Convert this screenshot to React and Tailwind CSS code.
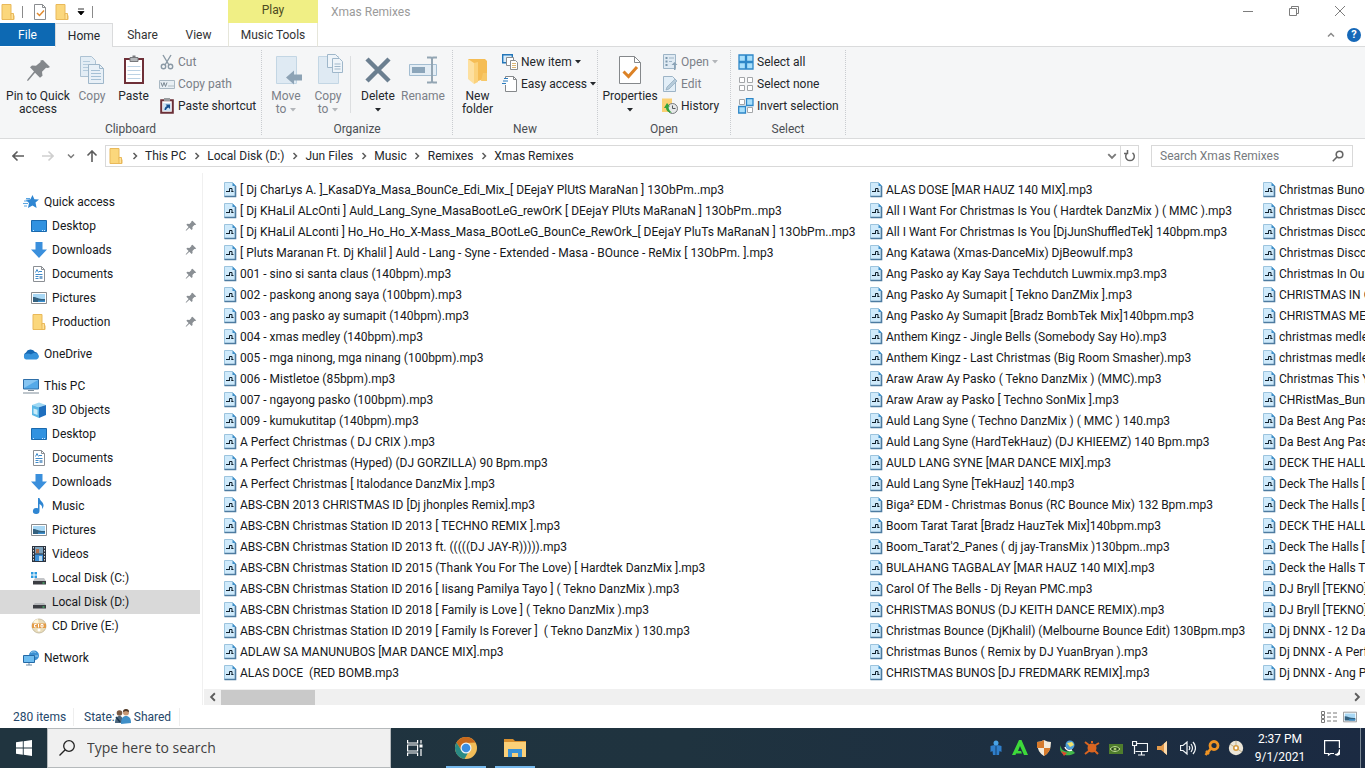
import React from 'react';

const quickAccess = [
  { name: 'Desktop', icon: 'desktop' },
  { name: 'Downloads', icon: 'download' },
  { name: 'Documents', icon: 'document' },
  { name: 'Pictures', icon: 'picture' },
  { name: 'Production', icon: 'folder' },
];

const thisPc = [
  { name: '3D Objects', icon: 'cube' },
  { name: 'Desktop', icon: 'desktop' },
  { name: 'Documents', icon: 'document' },
  { name: 'Downloads', icon: 'download' },
  { name: 'Music', icon: 'music' },
  { name: 'Pictures', icon: 'picture' },
  { name: 'Videos', icon: 'video' },
  { name: 'Local Disk (C:)', icon: 'systemDisk' },
  { name: 'Local Disk (D:)', icon: 'disk', selected: true },
  { name: 'CD Drive (E:)', icon: 'cd' },
];

const path = ['This PC', 'Local Disk (D:)', 'Jun Files', 'Music', 'Remixes', 'Xmas Remixes'];

const fileColumns = [
  {
    width: 'w-[646px]',
    files: [
      '[ Dj CharLys A. ]_KasaDYa_Masa_BounCe_Edi_Mix_[ DEejaY PlUtS MaraNan ] 13ObPm..mp3',
      '[ Dj KHaLil ALcOnti ] Auld_Lang_Syne_MasaBootLeG_rewOrK [ DEejaY PlUts MaRanaN ] 13ObPm..mp3',
      '[ Dj KHaLil ALconti ] Ho_Ho_Ho_X-Mass_Masa_BOotLeG_BounCe_RewOrk_[ DEejaY PluTs MaRanaN ] 13ObPm..mp3',
      '[ Pluts Maranan Ft. Dj Khalil ] Auld - Lang - Syne - Extended - Masa - BOunce - ReMix [ 13ObPm. ].mp3',
      '001 - sino si santa claus (140bpm).mp3',
      '002 - paskong anong saya (100bpm).mp3',
      '003 - ang pasko ay sumapit (140bpm).mp3',
      '004 - xmas medley (140bpm).mp3',
      '005 - mga ninong, mga ninang (100bpm).mp3',
      '006 - Mistletoe (85bpm).mp3',
      '007 - ngayong pasko (100bpm).mp3',
      '009 - kumukutitap (140bpm).mp3',
      'A Perfect Christmas ( DJ CRIX ).mp3',
      'A Perfect Christmas (Hyped) (DJ GORZILLA) 90 Bpm.mp3',
      'A Perfect Christmas [ Italodance DanzMix ].mp3',
      'ABS-CBN 2013 CHRISTMAS ID [Dj jhonples Remix].mp3',
      'ABS-CBN Christmas Station ID 2013 [ TECHNO REMIX ].mp3',
      'ABS-CBN Christmas Station ID 2013 ft. (((((DJ JAY-R))))).mp3',
      'ABS-CBN Christmas Station ID 2015 (Thank You For The Love) [ Hardtek DanzMix ].mp3',
      'ABS-CBN Christmas Station ID 2016 [ Iisang Pamilya Tayo ] ( Tekno DanzMix ).mp3',
      'ABS-CBN Christmas Station ID 2018 [ Family is Love ] ( Tekno DanzMix ).mp3',
      'ABS-CBN Christmas Station ID 2019 [ Family Is Forever ]  ( Tekno DanzMix ) 130.mp3',
      'ADLAW SA MANUNUBOS [MAR DANCE MIX].mp3',
      'ALAS DOCE  (RED BOMB.mp3',
    ],
  },
  {
    width: 'w-[393px]',
    files: [
      'ALAS DOSE [MAR HAUZ 140 MIX].mp3',
      'All I Want For Christmas Is You ( Hardtek DanzMix ) ( MMC ).mp3',
      'All I Want For Christmas Is You [DjJunShuffledTek] 140bpm.mp3',
      'Ang Katawa (Xmas-DanceMix) DjBeowulf.mp3',
      'Ang Pasko ay Kay Saya Techdutch Luwmix.mp3.mp3',
      'Ang Pasko Ay Sumapit [ Tekno DanZMix ].mp3',
      'Ang Pasko Ay Sumapit [Bradz BombTek Mix]140bpm.mp3',
      'Anthem Kingz - Jingle Bells (Somebody Say Ho).mp3',
      'Anthem Kingz - Last Christmas (Big Room Smasher).mp3',
      'Araw Araw Ay Pasko ( Tekno DanzMix ) (MMC).mp3',
      'Araw Araw ay Pasko [ Techno SonMix ].mp3',
      'Auld Lang Syne ( Techno DanzMix ) ( MMC ) 140.mp3',
      'Auld Lang Syne (HardTekHauz) (DJ KHIEEMZ) 140 Bpm.mp3',
      'AULD LANG SYNE [MAR DANCE MIX].mp3',
      'Auld Lang Syne [TekHauz] 140.mp3',
      'Biga² EDM - Christmas Bonus (RC Bounce Mix) 132 Bpm.mp3',
      'Boom Tarat Tarat [Bradz HauzTek Mix]140bpm.mp3',
      "Boom_Tarat'2_Panes ( dj jay-TransMix )130bpm..mp3",
      'BULAHANG TAGBALAY [MAR HAUZ 140 MIX].mp3',
      'Carol Of The Bells - Dj Reyan PMC.mp3',
      'CHRISTMAS BONUS (DJ KEITH DANCE REMIX).mp3',
      'Christmas Bounce (DjKhalil) (Melbourne Bounce Edit) 130Bpm.mp3',
      'Christmas Bunos ( Remix by DJ YuanBryan ).mp3',
      'CHRISTMAS BUNOS [DJ FREDMARK REMIX].mp3',
    ],
  },
  {
    width: 'w-[393px]',
    files: [
      'Christmas Bunos',
      'Christmas Disco',
      'Christmas Disco',
      'Christmas Disco',
      'Christmas In Our',
      'CHRISTMAS IN OUR',
      'CHRISTMAS MEDLEY',
      'christmas medley',
      'christmas medley',
      'Christmas This Year',
      'CHRistMas_BunCe',
      'Da Best Ang Pasko',
      'Da Best Ang Pasko',
      'DECK THE HALL',
      'Deck The Halls [',
      'Deck The Halls [',
      'DECK THE HALLS',
      'Deck The Halls [T',
      'Deck the Halls Te',
      'DJ Bryll [TEKNO]',
      'DJ Bryll [TEKNO]',
      'Dj DNNX - 12 Days',
      'Dj DNNX - A Perfect',
      'Dj DNNX - Ang Pasko',
    ],
  },
];

const FolderShape = () => (
  <>
    <path d="M2 .5h9v11l3 0v4H2z" fill="#fbd77c" stroke="#e9b95a" />
    <path d="M11 9.5h2.500v6H11z" fill="#ffe29a" stroke="#e9b95a" />
  </>
);

const PinShape = () => (
  <path d="M10 1l5 5-1.500.7-1-.2-2.600 2.700.2 2.800-1.300 1.200-3-3L2 14l-1 .2.200-1L4.800 9.200l-3-3L3 5l2.900.2L8.600 2.600 8.400 1.700z" fill="currentColor" />
);

const icons = {
  folder: <FolderShape />,
  star: (
    <>
      <path d="M9.500 1l1.900 4.200 4.600.4-3.500 3 1.100 5.400-4.100-2.600L5 14l1-5-3.500-3.300 4.900-.5z" fill="#2f86d2" />
      <path d="M1 7h4M0 9.500h5M1 12h3M3 4.500h4" stroke="#5aa5e2" strokeWidth="1" />
    </>
  ),
  desktop: (
    <>
      <path d="M.5 2.500h15v11H.5z" fill="#3192e0" stroke="#1a69ad" />
      <path d="M2 12.500h1M11 12.500h1M13 12.500h1" stroke="#cfe8ff" />
    </>
  ),
  download: <path d="M4.500 0h7v7.500H16L8 16 0 7.500h4.500z" fill="#3a8fdc" />,
  document: (
    <>
      <path d="M2.500.5h8l3 3v12h-11z" fill="#fff" stroke="#8b8f94" />
      <path d="M10.500.5v3h3" fill="none" stroke="#8b8f94" />
      <path d="M4.500 6.500l1.500-3 1.500 3M8 5.500h3M4.500 8.500h7M4.500 10.500h3M4.500 12.500h3" fill="none" stroke="#3f8ac9" />
      <path d="M8.500 10h3v3h-3z" fill="#7ba7cf" />
    </>
  ),
  picture: (
    <>
      <path d="M.5 2.500h15v11H.5z" fill="#fff" stroke="#8a8d90" />
      <path d="M2 4h12v8H2z" fill="#a9d8f5" />
      <path d="M2 7c4 0 6 2.500 12 2v3H2z" fill="#34617f" />
      <path d="M7 10.500h7V12H7z" fill="#3b8fce" />
    </>
  ),
  cloud: (
    <>
      <path d="M3.500 13A3.500 3.500 0 013 6.500 5 5 0 0112 6a3.600 3.600 0 01.500 7z" fill="#1568b3" />
      <path d="M3 13.500a3 3 0 01-.500-5.500c2-1 4-.5 5.500.5 2-2 5-2 6.500-.5a3 3 0 01-1 5.500z" fill="#3793db" />
    </>
  ),
  computer: (
    <>
      <path d="M.5 1.500h15v9.500H.5z" fill="#54a9e8" stroke="#2f6fa8" />
      <path d="M1 2h14L1 10z" fill="#86c5f2" />
      <path d="M5 12.500h6M0 15h16" stroke="#7f8d99" />
    </>
  ),
  cube: (
    <>
      <path d="M1 3l7-2.500L15 3l-7 2.200z" fill="#9ed8f4" />
      <path d="M1 3l7 2.200V16L1 13z" fill="#5cb8e6" />
      <path d="M15 3L8 5.200V16l7-3z" fill="#1f6fbe" />
      <path d="M2.500 6.500l4 1.300V13l-4-1.500z" fill="#c9ecfa" />
    </>
  ),
  music: <path d="M7 0h1.500c.3 3 4.500 4 4 8-.2 1.500-1 2.500-1.500 3 .6-2.500-.5-4-2.500-5v7A3.300 3 0 115.500 10 4 4 0 017 10.300z" fill="#2f86d2" />,
  video: (
    <>
      <path d="M1 0h14v16H1z" fill="#2c3440" />
      <path d="M4 1h8v6.500H4z" fill="#7fa3bd" />
      <path d="M4 8.500h8V15H4z" fill="#3c8fd6" />
      <path d="M5 3h3v4H5z" fill="#b06f4c" />
      <path d="M8 10h3v5H8z" fill="#bcdcf3" />
      <path d="M2.500 1v14M13.500 1v14" stroke="#d7dce0" strokeDasharray="1.500 1.500" />
    </>
  ),
  systemDisk: (
    <>
      <path d="M0 2h2.500v2.500H0zM3.500 2H6v2.500H3.500zM0 5.500h2.500V8H0zM3.500 5.500H6V8H3.500z" fill="#2b9ae0" />
      <path d="M4 8h9l2 3H2z" fill="#c3c5c8" />
      <path d="M2 11h13v3.500H2z" fill="#3b3d42" />
      <path d="M11.500 13h2" stroke="#4ce07a" />
    </>
  ),
  disk: (
    <>
      <path d="M4 9h9l2 2H2z" fill="#b4b6b9" />
      <path d="M2 11h13v3.500H2z" fill="#3b3d42" />
      <path d="M11.500 13h2" stroke="#4ce07a" />
    </>
  ),
  cd: (
    <>
      <circle cx="8" cy="8" r="7" fill="#e9dcb9" stroke="#c9bfa4" />
      <path d="M8 8L2 4a7 7 0 015-3z" fill="#fff6dc" />
      <path d="M1 5.500h14v4.500H1z" fill="#e39b46" />
      <path d="M5.500 6.500h-2v2.500h2M7.500 6v3.500M10 6.500h2v2.500h-2z" stroke="#fff" />
      <circle cx="8" cy="12" r="1.500" fill="#fff" />
    </>
  ),
  network: (
    <>
      <circle cx="11" cy="5.500" r="5" fill="#3a8fd2" />
      <path d="M8 3c2-2 4-1 5 0M7 6h8" fill="none" stroke="#9bd0f2" />
      <path d="M.5 5.500h11v7H.5z" fill="#6dbcf0" stroke="#2469a5" />
      <path d="M3 15h6M6 13v2" stroke="#6c8aa5" />
    </>
  ),
  audio: (
    <>
      <path d="M.500.5h8l3 3v11H.5z" fill="#cfeafb" stroke="#9cc4de" />
      <path d="M11.500 4v10.500H.5" fill="none" stroke="#4d7ba0" strokeWidth="1.600" />
      <path d="M8.500.5L12 4H8.500z" fill="#3f8fc9" />
      <path d="M2 9.500h3M7.500 9.500h2M5.500 10V6.500H8V10" fill="none" stroke="#10202c" />
    </>
  ),
  cut: (
    <g fill="none" stroke="#8a99a5" strokeWidth="1.400">
      <path d="M4 1l6 10M12 1L6 11" />
      <circle cx="4.500" cy="12.500" r="2.200" />
      <circle cx="11.500" cy="12.500" r="2.200" />
    </g>
  ),
  copyPath: (
    <>
      <path d="M.5 4.500h15v8H.5z" fill="#e8eff4" stroke="#a9b8c3" />
      <path d="M2 6.500l1.500 4 1.500-4 1.500 4 1.500-4M9.500 10h1M11.500 10h1M13.500 10h1" fill="none" stroke="#7a8893" />
    </>
  ),
  pasteShortcut: (
    <>
      <path d="M2.200 2.200h11.600v12.600H2.200z" fill="#fff" stroke="#6b3038" strokeWidth="2" />
      <path d="M5 0h6v3H5z" fill="#9a9da0" />
      <path d="M4 5h8v8H4z" fill="#cfe5f7" />
      <path d="M5.500 12c0-2 .5-3 2.500-4L6.500 6.500H11V11L9.500 9.500C8 10 7.500 11 7 12z" fill="#14508f" />
    </>
  ),
  newItem: (
    <>
      <path d="M.7.700h9.600v8H.7z" fill="#d7ecfb" stroke="#2376b9" strokeWidth="1.400" />
      <path d="M4.500 3.500h7v8h-7z" fill="#fff" stroke="#8a8d90" />
      <path d="M8.500 6.500h5l2 2v7h-7z" fill="#fff" stroke="#8a8d90" />
      <path d="M10 9.500h4M10 11.500h4M10 13.500h4" stroke="#dcb673" />
    </>
  ),
  easyAccess: (
    <>
      <path d="M3.500 3V.5h8l3 3v12h-11V9" fill="#fff" stroke="#85888b" />
      <path d="M11.500.5v3h3" fill="none" stroke="#85888b" />
      <path d="M2 2.500h4M1 5h5M0 7.500h4" stroke="#2b7cbf" strokeWidth="1.200" />
    </>
  ),
  open: (
    <>
      <path d="M1.500.5h12v14h-12z" fill="#dfeaf3" stroke="#9db4c6" />
      <path d="M3.500 3h2v2h-2zM3.500 6.500h2v2h-2zM3.500 10h2v2h-2z" fill="#7d98ad" />
      <path d="M7 4h5M7 7.500h3" stroke="#9db4c6" />
      <path d="M12 16v-5h-2.500L12.500 8l3 3H13.500v5z" fill="#8ba3b6" />
    </>
  ),
  edit: (
    <>
      <path d="M1.500.5h9l3 3v12h-12z" fill="#e2eef7" stroke="#9db4c6" />
      <path d="M4 14l1-3 8-8 2 2-8 8z" fill="#b6cbda" stroke="#8fa9bd" strokeWidth=".7" />
    </>
  ),
  history: (
    <>
      <path d="M0 .5h10V14H0z" fill="#fbd173" />
      <circle cx="10.500" cy="10.500" r="5" fill="#e6e8e9" stroke="#75797c" />
      <path d="M10.500 7.500v3h3" fill="none" stroke="#55595c" />
      <path d="M2 10l3-5 3 3.500H6.500c0 3 1.500 5 3.500 6-4 .5-6-2.500-6-4.500z" fill="#35a33c" />
    </>
  ),
  selectAll: <path d="M1 1h6.500v6.500H1zM8.500 1H15v6.500H8.500zM1 8.500h6.500V15H1zM8.500 8.500H15V15H8.500z" fill="#a9dffb" stroke="#2e87c8" strokeWidth="1.300" />,
  selectNone: <path d="M1.500 1.500h5v5h-5zM9.500 1.500h5v5h-5zM1.500 9.500h5v5h-5zM9.500 9.500h5v5h-5z" fill="#fff" stroke="#a3a6a9" />,
  invert: (
    <>
      <path d="M1.500 1.500h5v5h-5zM9.500 9.500h5v5h-5z" fill="#fff" stroke="#a3a6a9" />
      <path d="M8.500.7H15v6.800H8.500zM.7 8.500h6.800V15H.7z" fill="#a9dffb" stroke="#2e87c8" strokeWidth="1.300" />
    </>
  ),
  people: (
    <>
      <circle cx="4.500" cy="4" r="2.800" fill="#7a5a43" />
      <circle cx="11" cy="3.500" r="3" fill="#c99a76" />
      <path d="M8 3a3 3 0 016 0l-3-1z" fill="#4c3626" />
      <path d="M0 14c0-5 2-7 4.500-7S8 9 8 14z" fill="#4b667d" />
      <path d="M6 15c0-6 2-8 5-8s5 2 5 7z" fill="#3f8fc8" />
      <path d="M1 8l4 5" stroke="#1d3850" strokeWidth="1.500" />
    </>
  ),
};

const Icon = ({ name, className = 'size-4' }) => (
  <svg viewBox="0 0 16 16" className={`${className} shrink-0`} fill="none" aria-hidden="true">
    {icons[name]}
  </svg>
);

const Pin = ({ className }) => (
  <svg viewBox="0 0 16 16" className={`${className} shrink-0`} aria-hidden="true">
    <PinShape />
  </svg>
);

const bigIcons = {
  pin: (
    <path d="M21 6l7 7-2 1-2-.3-4 4 .5 4-2.500 2-5-5L6.500 26.500 5 27l.6-1.800L12 17.500 8 13.200l2-1.700 4 .3 4.600-3.800-.1-1.500z" fill="#84888c" />
  ),
  copy: (
    <>
      <path d="M4.500 2.500h11l4 4v16h-15z" fill="#e3edf5" stroke="#adc2d3" />
      <path d="M7 7.500h7M7 10.500h9M7 13.500h9M7 16.500h9" stroke="#b4cbdd" />
      <path d="M12.500 10.500h11l4 4v15h-15z" fill="#e8f0f7" stroke="#9fb7ca" />
      <path d="M23.500 10.500v4h4" stroke="#9fb7ca" />
      <path d="M15 16.500h9M15 19.500h10M15 22.500h10M15 25.500h10" stroke="#a5c0d5" />
    </>
  ),
  paste: (
    <>
      <path d="M7 5h18v24H7z" fill="#fff" stroke="#6f3038" strokeWidth="2" />
      <path d="M12 3.500h8v4h-8z" fill="#b4b7ba" stroke="#77797c" />
      <path d="M14.500 1.500h3v2h-3z" fill="#77797c" />
      <path d="M9.500 12.500h13M9.500 16.500h13M9.500 20.500h13M9.500 24.500h13" stroke="#bcd2e4" />
    </>
  ),
  move: (
    <>
      <path d="M6.500 2.500h20v27h-20z" fill="#dfeaf3" stroke="#c3d6e4" />
      <path d="M16 23.500l8-7v4h8v6h-8v4z" fill="#8da3b5" />
    </>
  ),
  copyTo: (
    <>
      <path d="M6.500 2.500h20v27h-20z" fill="#dfeaf3" stroke="#c3d6e4" />
      <path d="M15.500.5h8l3 3v10h-11z" fill="#eef4f9" stroke="#9fb7ca" />
      <path d="M20.500 4.500h7l3 3v11h-10z" fill="#eef4f9" stroke="#9fb7ca" />
      <path d="M22.500 10h6M22.500 12.500h6M22.500 15h6" stroke="#9fb7ca" />
    </>
  ),
  remove: <path d="M5 5l22 22M27 5L5 27" stroke="#6b7f90" strokeWidth="4.500" />,
  rename: (
    <>
      <path d="M2.500 10.500h27v11h-27z" fill="#e3edf5" stroke="#a3bdd1" />
      <path d="M5 13h13v6H5z" fill="#8ba5ba" />
      <path d="M20 3.500h4l1 1 1-1h4M25 4.500v23M20 28.500h4l1-1 1 1h4" stroke="#93a5b3" strokeWidth="2" />
    </>
  ),
  newFolder: (
    <>
      <path d="M6 5h17l2 2v17l-12 4z" fill="#f5bd55" />
      <path d="M6 5l6 4v21l-6-5z" fill="#fde0a0" />
      <path d="M12 9l4-1v20l-4 2z" fill="#fbd27c" />
      <path d="M21 19h4v8h-6z" fill="#f7c868" />
    </>
  ),
  properties: (
    <>
      <path d="M5.500 2.500h15l6 6v21h-21z" fill="#fff" stroke="#85888b" />
      <path d="M20.500 2.500v6h6" stroke="#85888b" />
      <path d="M9.500 17.500l5 5L23 13" stroke="#dc8226" strokeWidth="3" />
    </>
  ),
};

const Caret = ({ className = '' }) => (
  <svg viewBox="0 0 6 4" className={`h-1 w-1.5 shrink-0 ${className}`} aria-hidden="true">
    <path d="M0 0h6L3 3.500z" fill="currentColor" />
  </svg>
);

const Chevron = ({ className = 'size-2' }) => (
  <svg viewBox="0 0 8 8" className={`${className} shrink-0`} fill="none" stroke="currentColor" strokeWidth="1.500" aria-hidden="true">
    <path d="M2.500 1l3 3-3 3" />
  </svg>
);

const BigButton = ({ icon, lines, width, caret, disabled }) => (
  <button
    type="button"
    disabled={disabled}
    className={`${width} flex shrink-0 flex-col items-center pt-[3px] text-center leading-[13px] whitespace-nowrap ${disabled ? 'text-[#7b8088]' : 'text-[#24272b]'}`}
  >
    <svg viewBox="0 0 32 32" className="mb-[4px] size-8 shrink-0" fill="none" aria-hidden="true">
      {bigIcons[icon]}
    </svg>
    <span>{lines[0]}</span>
    <span className="flex h-[13px] items-center gap-1">
      {lines[1]}
      {caret && <Caret className={disabled ? 'text-[#b3b6ba]' : ''} />}
    </span>
  </button>
);

const SmallButton = ({ icon, label, caret, disabled }) => (
  <button
    type="button"
    disabled={disabled}
    className={`flex h-[22px] items-center gap-[3px] whitespace-nowrap ${disabled ? 'text-[#7b8088]' : 'text-[#24272b]'}`}
  >
    <Icon name={icon} />
    <span>{label}</span>
    {caret && <Caret className={disabled ? 'text-[#b3b6ba]' : ''} />}
  </button>
);

const RibbonGroup = ({ title, width, children }) => (
  <section aria-label={title} className={`${width} my-[3px] flex shrink-0 flex-col border-r border-dotted border-[#c9ccd0]`}>
    <div className="flex h-[68px] shrink-0 pt-px">{children}</div>
    <div className="shrink-0 pt-[3px] text-center leading-4 text-[#4a4e53]">{title}</div>
  </section>
);

const TitleBar = () => (
  <header className="flex h-[47px] shrink-0">
    <div className="flex w-[228px] shrink-0 flex-col">
      <div className="flex h-[23px] items-center text-[#707070]">
        <Icon name="folder" />
        <span className="ml-[6px] h-3 w-px bg-[#8a8a8a]" />
        <button type="button" aria-label="Properties" className="ml-[9px]">
          <svg viewBox="0 0 16 16" className="size-4" fill="none">
            <path d="M2.500.5h8l3 3v12h-11z" fill="#fff" stroke="#8a8d90" />
            <path d="M10.500.5v3h3" stroke="#8a8d90" />
            <path d="M5 9l2.500 2.500L12 6.500" stroke="#e08a2e" strokeWidth="1.500" />
          </svg>
        </button>
        <button type="button" aria-label="New folder" className="ml-[6px]">
          <Icon name="folder" />
        </button>
        <button type="button" aria-label="Customize Quick Access Toolbar" className="ml-[7px] text-black">
          <svg viewBox="0 0 8 8" className="size-2">
            <path d="M1 1h6M1 3.500h6L4 7z" fill="currentColor" stroke="currentColor" strokeWidth=".8" />
          </svg>
        </button>
        <span className="ml-[7px] h-3 w-px bg-[#8a8a8a]" />
      </div>
      <nav className="flex h-6">
        <button type="button" className="h-[23px] w-[55px] bg-[#0d69b3] text-white">File</button>
        <button type="button" className="w-[58px] border-x border-t border-[#dadbdc] bg-[#f5f6f7] text-[#24272b]">Home</button>
        <button type="button" className="w-[59px] border-b border-[#dadbdc] text-[#333]">Share</button>
        <button type="button" className="w-14 border-b border-[#dadbdc] pr-[3px] text-[#333]">View</button>
      </nav>
    </div>
    <div className="flex w-[90px] shrink-0 flex-col">
      <div className="h-[23px] bg-[#f0ef85] pt-[2px] text-center leading-4 text-[#4d4c1f]">Play</div>
      <button type="button" className="h-6 border-x border-b border-[#dadbdc] border-x-[#e6e6da] whitespace-nowrap text-[#333]">Music Tools</button>
    </div>
    <div className="flex min-w-0 flex-1 flex-col border-b border-[#dadbdc]">
      <div className="flex h-[23px] items-center text-[#9a9a9a]">
        <h1 className="flex-1 pl-[13px]">Xmas Remixes</h1>
        <div className="flex items-center pr-[2px] pb-[2px] text-[#7d7d7d]">
          <button type="button" aria-label="Minimize" className="flex w-[46px] justify-center">
            <svg viewBox="0 0 10 10" className="size-2.5" stroke="currentColor"><path d="M0 5.500h10" /></svg>
          </button>
          <button type="button" aria-label="Restore" className="flex w-[46px] justify-center">
            <svg viewBox="0 0 10 10" className="size-2.5" fill="none" stroke="currentColor"><path d="M.5 2.500h7v7h-7zM2.500 2.500v-2h7v7h-2" /></svg>
          </button>
          <button type="button" aria-label="Close" className="flex w-[46px] justify-center">
            <svg viewBox="0 0 10 10" className="size-2.5" stroke="currentColor"><path d="M0 0l10 10M10 0L0 10" /></svg>
          </button>
        </div>
      </div>
      <div className="flex flex-1 items-center justify-end gap-3 pr-1">
        <button type="button" aria-label="Minimize the Ribbon" className="text-[#8a8a8a]">
          <Chevron className="size-2 -rotate-90" />
        </button>
        <button type="button" aria-label="Help" className="flex size-[14px] items-center justify-center rounded-full bg-[#1568b8] text-[11px] leading-none font-bold text-white">?</button>
      </div>
    </div>
  </header>
);

const Ribbon = () => (
  <div className="flex h-[92px] shrink-0 overflow-hidden border-b border-[#dadbdc] bg-[#f5f6f7]">
    <RibbonGroup title="Clipboard" width="w-[262px]">
      <BigButton icon="pin" lines={['Pin to Quick', 'access']} width="w-[76px]" />
      <BigButton icon="copy" lines={['Copy']} width="w-8" disabled />
      <BigButton icon="paste" lines={['Paste']} width="w-[51px]" />
      <div>
        <SmallButton icon="cut" label="Cut" disabled />
        <SmallButton icon="copyPath" label="Copy path" disabled />
        <SmallButton icon="pasteShortcut" label="Paste shortcut" />
      </div>
    </RibbonGroup>
    <RibbonGroup title="Organize" width="w-[191px]">
      <BigButton icon="move" lines={['Move', 'to']} width="w-12" caret disabled />
      <BigButton icon="copyTo" lines={['Copy', 'to']} width="w-9" caret disabled />
      <div className="mx-[4px] my-[5px] w-px bg-[#dcdee0]" />
      <BigButton icon="remove" lines={['Delete']} width="w-[46px]" caret />
      <BigButton icon="rename" lines={['Rename']} width="w-[44px]" disabled />
    </RibbonGroup>
    <RibbonGroup title="New" width="w-[145px]">
      <BigButton icon="newFolder" lines={['New', 'folder']} width="w-[49px]" />
      <div>
        <SmallButton icon="newItem" label="New item" caret />
        <SmallButton icon="easyAccess" label="Easy access" caret />
      </div>
    </RibbonGroup>
    <RibbonGroup title="Open" width="w-[133px]">
      <BigButton icon="properties" lines={['Properties']} width="w-16" caret />
      <div>
        <SmallButton icon="open" label="Open" caret disabled />
        <SmallButton icon="edit" label="Edit" disabled />
        <SmallButton icon="history" label="History" />
      </div>
    </RibbonGroup>
    <RibbonGroup title="Select" width="w-[115px]">
      <div className="pl-[7px]">
        <SmallButton icon="selectAll" label="Select all" />
        <SmallButton icon="selectNone" label="Select none" />
        <SmallButton icon="invert" label="Invert selection" />
      </div>
    </RibbonGroup>
  </div>
);

const Arrow = ({ className = '' }) => (
  <svg viewBox="0 0 12 12" className={`size-3 ${className}`} fill="none" stroke="currentColor" strokeWidth="1.600" aria-hidden="true">
    <path d="M12 6H1M5.500 1.500L1 6l4.500 4.500" />
  </svg>
);

const AddressBar = () => (
  <div className="flex h-[34px] shrink-0 items-center pr-3 text-[#24272b]">
    <button type="button" aria-label="Back" className="flex w-9 justify-center text-[#5c5c5c]"><Arrow /></button>
    <button type="button" aria-label="Forward" className="flex w-6 justify-center text-[#cfcfcf]"><Arrow className="rotate-180" /></button>
    <button type="button" aria-label="Recent locations" className="flex w-[22px] justify-center text-[#7a7a7a]"><Chevron className="size-2 rotate-90" /></button>
    <button type="button" aria-label="Up" className="flex w-[23px] pl-[4px] text-[#5c5c5c]"><Arrow className="rotate-90" /></button>
    <div className="flex h-[22px] min-w-0 flex-1 items-center border border-[#d9d9d9] pl-[2px]">
      <Icon name="folder" />
      {path.map(part => (
        <React.Fragment key={part}>
          <span className="flex w-[21px] shrink-0 justify-center text-[#5c5c5c]"><Chevron /></span>
          <a href="#" className="whitespace-nowrap">{part}</a>
        </React.Fragment>
      ))}
      <button type="button" aria-label="Previous locations" className="ml-auto px-[3px] text-[#7a7a7a]"><Chevron className="size-2.5 rotate-90" /></button>
      <button type="button" aria-label="Refresh" className="flex h-full w-[18px] items-center justify-center border-l border-[#d9d9d9] text-[#666]">
        <svg viewBox="0 0 12 12" className="size-3" fill="none" stroke="currentColor" strokeWidth="1.500"><path d="M3.500 2.800A4.300 4.300 0 108.500 2.800M3.500 0v3.500H0" /></svg>
      </button>
    </div>
    <label className="ml-3 flex h-[22px] w-[202px] shrink-0 items-center border border-[#d9d9d9] px-2">
      <input type="text" aria-label="Search Xmas Remixes" placeholder="Search Xmas Remixes" className="min-w-0 flex-1 outline-none placeholder:text-[#767a7e]" />
      <svg viewBox="0 0 12 12" className="size-3" fill="none" stroke="#666" strokeWidth="1.600"><circle cx="7.500" cy="4.500" r="3.300" /><path d="M5.200 6.800L.8 11.200" /></svg>
    </label>
  </div>
);

const NavItem = ({ name, icon, root, pinned, selected }) => (
  <li className={`mr-[2px] ${selected ? 'bg-[#d9d9d9]' : ''}`}>
    <a href="#" className={`flex h-6 items-center gap-[5px] pr-[3px] ${root ? 'pl-[23px]' : 'pl-[31px]'}`}>
      <Icon name={icon} />
      <span className="flex-1 whitespace-nowrap">{name}</span>
      {pinned && <Pin className="size-3 text-[#8a8f94]" />}
    </a>
  </li>
);

const Sidebar = () => (
  <nav aria-label="Navigation pane" className="w-[203px] shrink-0 space-y-2 border-r border-[#f0f0f0] pt-[17px]">
    <ul>
      <NavItem name="Quick access" icon="star" root />
      {quickAccess.map(item => <NavItem key={item.name} {...item} pinned />)}
    </ul>
    <ul>
      <NavItem name="OneDrive" icon="cloud" root />
    </ul>
    <ul>
      <NavItem name="This PC" icon="computer" root />
      {thisPc.map(item => <NavItem key={item.name} {...item} />)}
    </ul>
    <ul>
      <NavItem name="Network" icon="network" root />
    </ul>
  </nav>
);

const FileList = () => (
  <main className="flex min-w-0 flex-1 flex-col">
    <div className="flex min-h-0 flex-1 overflow-hidden pt-[6px] pl-[21px]">
      {fileColumns.map((column, i) => (
        <ul key={i} className={`${column.width} shrink-0`}>
          {column.files.map((file, j) => (
            <li key={j} className="flex h-[21px] items-center whitespace-pre">
              <Icon name="audio" />
              <span>{file}</span>
            </li>
          ))}
        </ul>
      ))}
    </div>
    <div className="ml-px flex h-4 shrink-0 items-center bg-[#f0f0f0] text-[#5c5c5c]">
      <button type="button" aria-label="Scroll left" className="flex w-[17px] justify-center"><Chevron className="size-2.5 rotate-180" /></button>
      <div className="h-[15px] w-[94px] bg-[#c9c9c9]" />
      <button type="button" aria-label="Scroll right" className="ml-auto flex w-[17px] justify-center"><Chevron className="size-2.5" /></button>
    </div>
  </main>
);

const StatusBar = () => (
  <footer className="flex h-[23px] shrink-0 items-center pr-2 text-[#25476a]">
    <span className="w-[74px] border-r border-[#eeeeee] pl-[13px] whitespace-nowrap">280 items</span>
    <span className="flex items-center pl-[10px]">
      State:
      <Icon name="people" />
      <span className="ml-[3px] border-r border-[#eeeeee] pr-2">Shared</span>
    </span>
    <button type="button" aria-label="Details view" className="ml-auto">
      <svg viewBox="0 0 16 14" className="h-3.5 w-4" fill="none" stroke="#7a7a7a">
        <path d="M.5 1.500h3v3h-3zM.5 5.500h3v3h-3zM.5 9.500h3v3h-3z" />
        <path d="M6 3h4M12 3h4M6 7h4M12 7h4M6 11h4M12 11h4" />
      </svg>
    </button>
    <button type="button" aria-label="Large icons view" className="ml-[6px]"><Icon name="picture" className="size-3.5" /></button>
  </footer>
);

const trayIcons = [
  { name: 'Assistant', art: <><circle cx="8" cy="3" r="2.500" fill="#49a3e6" /><path d="M2.500 6Q8 4 13.500 6v6l-2-1-.5 4H5l-.5-4-2 1z" fill="#2f7fcb" /><path d="M8 6v9" stroke="#16406b" /></> },
  { name: 'Driver', art: <path d="M7 0h2.500L16 15h-4L8 6l-2 5 3 0 1 2.500H4L3.500 15H0z" fill="#3dd93a" /> },
  { name: 'Security', art: <><path d="M1 2q4 0 7-2 3 2 7 2 0 10-7 14Q1 12 1 2z" fill="#f3ead9" /><path d="M8 0Q5 2 1 2v6h7zM8 8h6.500Q13 13 8 16z" fill="#d67a2b" /></> },
  { name: 'Download manager', art: <><circle cx="10" cy="5" r="4.500" fill="#4c9fda" /><path d="M7 3l5-1 2 3-4 2z" fill="#f2e36c" /><path d="M1 5c-1 6 6 8 11 5l3 3C9 17 0 16 0 8z" fill="#41b649" /><path d="M5 7c1 3 4 4 7 3" stroke="#fff" strokeWidth="1.500" /><path d="M1 11l6 2-3 3z" fill="#e0492d" /></> },
  { name: 'Avast', art: <><circle cx="8" cy="8" r="4.500" fill="#d96521" /><path d="M1 2l5 4M15 3l-5 3M1 14l5-4M14 14l-4-4M8 3V1" stroke="#d96521" strokeWidth="2" /></> },
  { name: 'NVIDIA', art: <><path d="M1 4h14v10H1z" fill="#4f7d2c" /><path d="M2 9q5-5 10 0-5 5-10 0z" stroke="#c4e09a" fill="#24401a" /><circle cx="7" cy="9" r="1.500" fill="#a6d16b" /></> },
  { name: 'Network', art: <path d="M4.500 3.500h11v8H3.500M9.500 12v3M6 15h7M.5 1.500h4v4h-4zM2.500 6v8" stroke="#f3f6f8" strokeWidth="1.200" /> },
  { name: 'Audio console', art: <><path d="M1 6h4l6-5v14l-6-5H1z" fill="#e39a4c" /><path d="M8 3.500L11 1v14l-3-2.500z" fill="#fbd9ab" /></> },
  { name: 'Volume', art: <path d="M.5 5.500h2.500L7 2v12l-4-3.500H.5zM9 6q1.500 2 0 4M11 4q3 4 0 8M13 2q5 6 0 12" stroke="#f3f6f8" strokeWidth="1.200" /> },
  { name: 'Search tool', art: <><circle cx="10" cy="5.500" r="4" stroke="#ef9324" strokeWidth="2.800" /><path d="M7 8.500L1.500 15M2 11l3 3" stroke="#ef9324" strokeWidth="2.500" /></> },
  { name: 'Disc', art: <><circle cx="8" cy="8" r="7.200" fill="#ece6d8" /><path d="M2 4l12 8M8 1v6" stroke="#bcae8d" /><circle cx="8" cy="8" r="3" fill="#d69a3d" /><circle cx="8" cy="8" r="1.400" fill="#fff" /></> },
];

const Taskbar = () => (
  <footer className="flex h-10 shrink-0 bg-linear-to-r from-[#20343f] via-[#1f333f] to-[#1b2a42] text-white">
    <button type="button" aria-label="Start" className="flex w-[47px] items-center justify-center">
      <svg viewBox="0 0 16 16" className="size-4" fill="#fff"><path d="M0 2.300L6.800 1.300v6.200H0zM7.700 1.200L16 0v7.500H7.700zM0 8.400h6.800v6.300L0 13.700zM7.700 8.400H16V16l-8.300-1.200z" /></svg>
    </button>
    <label className="flex w-[344px] items-center gap-3 border border-[#b5b9bb] bg-[#f0f0f0] pl-[11px] text-[#2b2b2b]">
      <svg viewBox="0 0 16 16" className="size-4" fill="none" stroke="#222" strokeWidth="1.300"><circle cx="10" cy="6" r="5.300" /><path d="M6.200 9.800L.5 15.500" /></svg>
      <input type="text" aria-label="Type here to search" placeholder="Type here to search" className="min-w-0 flex-1 font-['Open_Sans',sans-serif] text-sm outline-none placeholder:text-[#404040]" />
    </label>
    <button type="button" aria-label="Task View" className="flex w-[50px] items-center justify-center pr-[3px]">
      <svg viewBox="0 0 16 16" className="size-4" fill="none" stroke="#fff" strokeWidth="1.200"><path d="M.6 0v3h10V0M.6 16v-3h10v3M.6 5h10v6H.6zM14 0v3.500M14 9v7" /><path d="M12.500 4.500h3v3h-3z" fill="#fff" stroke="none" /></svg>
    </button>
    <button type="button" aria-label="Google Chrome" className="flex w-[49px] flex-col items-center pt-[8px]">
      <svg viewBox="0 0 24 24" className="size-6">
        <circle cx="12" cy="12" r="11" fill="#f2bd58" />
        <path d="M2.500 6.500A11 11 0 0121.500 6.500L12 7 7.500 14.500z" fill="#c8691c" />
        <path d="M2.500 6.500A11 11 0 0010.500 23l5-9-8 .5z" fill="#2a8a84" />
        <circle cx="12" cy="12" r="5.500" fill="#eef3f6" />
        <circle cx="12" cy="12" r="4.300" fill="#3b8de0" />
      </svg>
      <span className="mt-auto h-[2px] w-10 bg-[#76b9ed]" />
    </button>
    <button type="button" aria-label="File Explorer" className="flex w-[49px] flex-col items-center pt-[8px]">
      <svg viewBox="0 0 24 24" className="size-6">
        <path d="M1 3h9l2 2h11v3H1z" fill="#d9902f" />
        <path d="M1 6h22v15H1z" fill="#fbd078" />
        <path d="M5 13h14v8h-4v-4H9v4H5z" fill="#3a92d6" />
      </svg>
      <span className="mt-auto h-[2px] w-10 bg-[#76b9ed]" />
    </button>
    <div className="ml-auto flex items-center">
      {trayIcons.map(({ name, art }) => (
        <button key={name} type="button" aria-label={name} className="flex w-6 justify-center">
          <svg viewBox="0 0 16 16" className="size-4" fill="none">{art}</svg>
        </button>
      ))}
    </div>
    <button type="button" className="w-16 text-center leading-[18px] whitespace-nowrap">
      <span className="block">2:37 PM</span>
      <span className="block">9/1/2021</span>
    </button>
    <button type="button" aria-label="Notifications" className="flex w-10 items-center justify-center">
      <svg viewBox="0 0 16 16" className="size-4" fill="none" stroke="#fff" strokeWidth="1.200"><path d="M10 13.500H6.500L4.500 15v-1.500H.6V.6h14.800V8" /><path d="M15 9a3.500 3.500 0 11-4.500 5c3 0 4.500-2 4.500-5z" fill="#fff" stroke="none" /></svg>
    </button>
    <button type="button" aria-label="Show desktop" className="ml-2 w-[5px] border-l border-[#7b8894]" />
  </footer>
);

const App = () => (
  <div className="flex h-screen flex-col overflow-hidden bg-white font-[Roboto,'Noto_Sans',sans-serif] text-[12px] text-[#16181b]">
    <TitleBar />
    <Ribbon />
    <AddressBar />
    <div className="flex min-h-0 flex-1">
      <Sidebar />
      <FileList />
    </div>
    <StatusBar />
    <Taskbar />
  </div>
);

export default App;
